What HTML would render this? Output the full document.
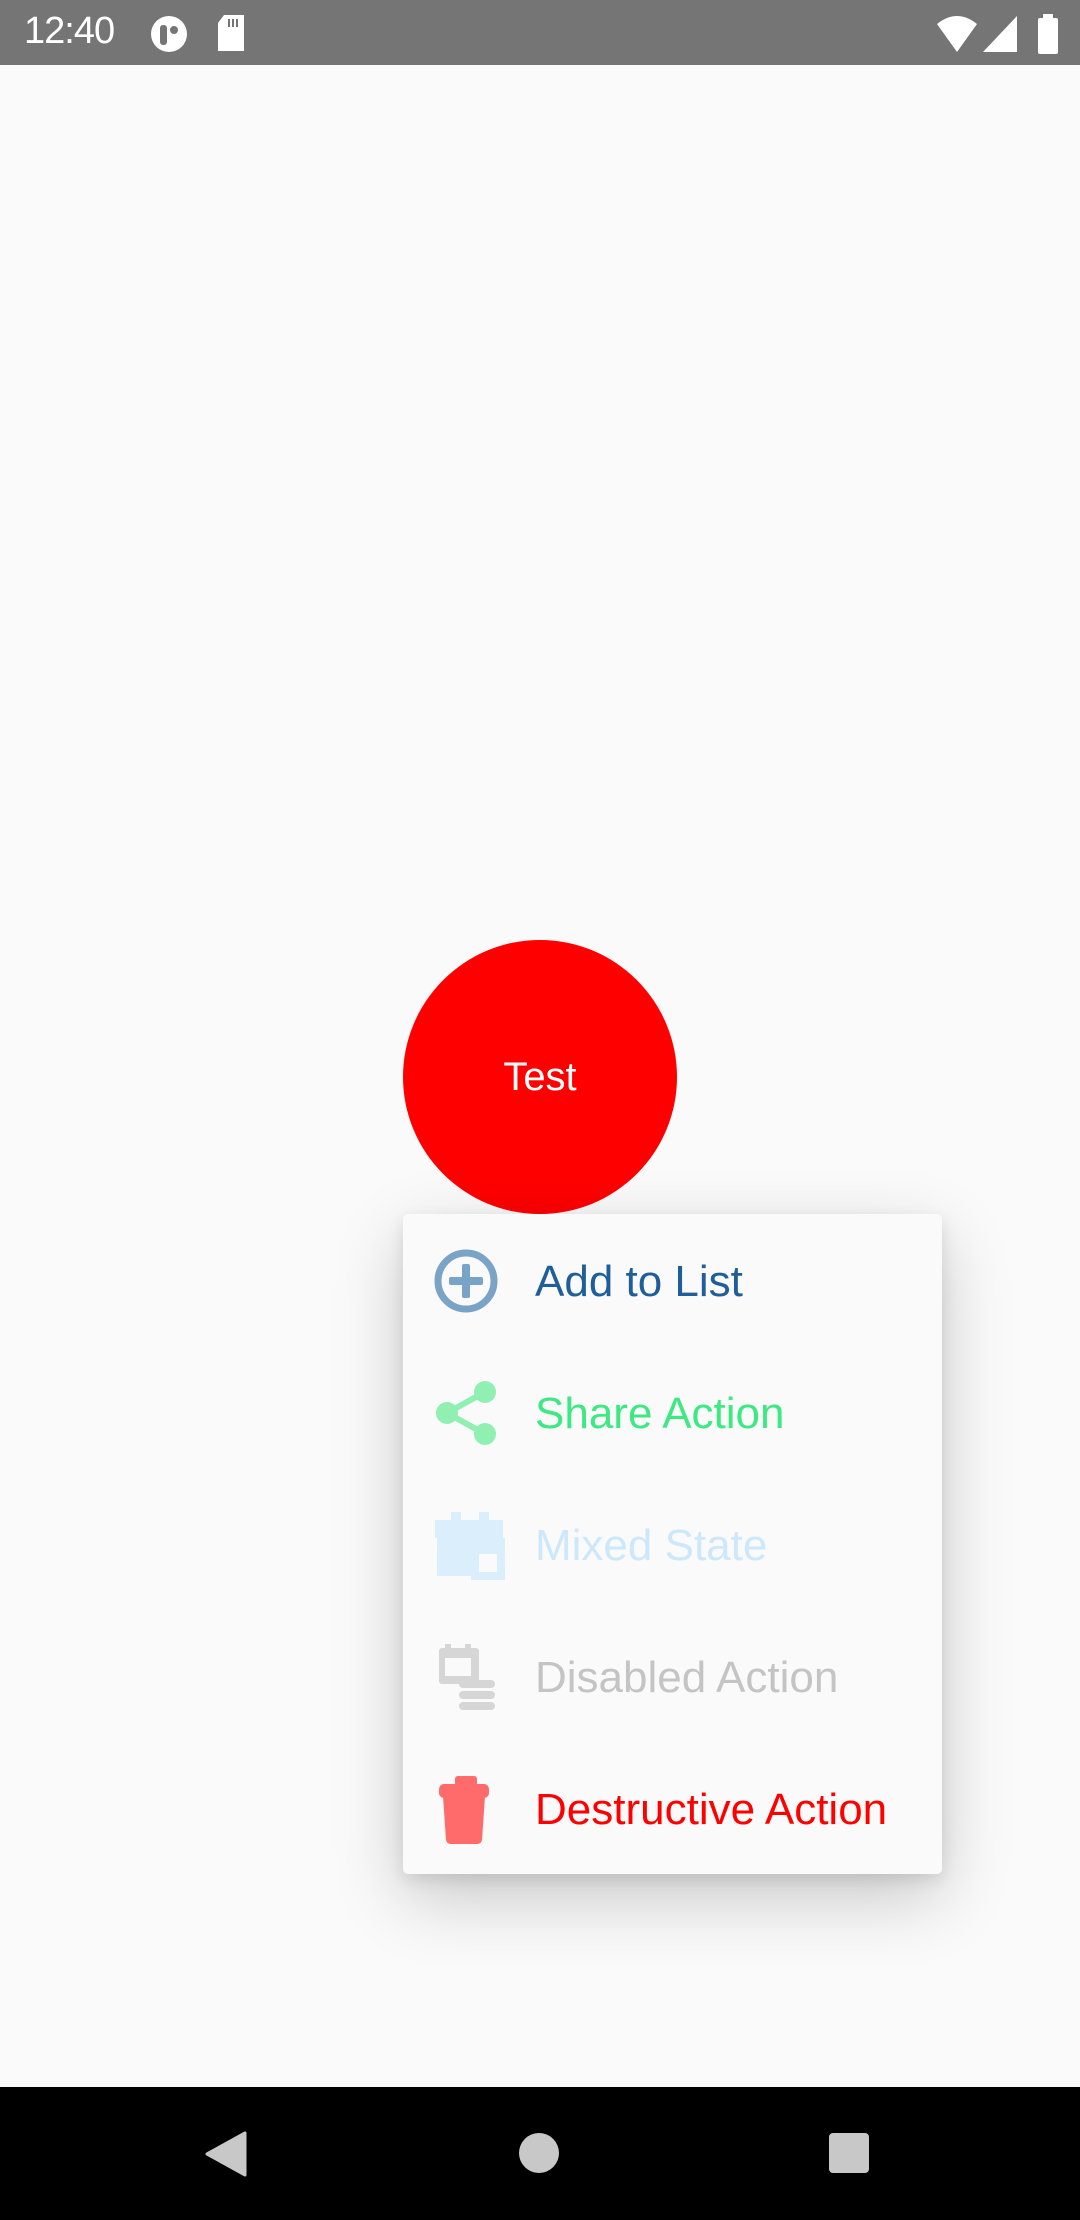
<!DOCTYPE html>
<html><head><meta charset="utf-8"><style>
*{margin:0;padding:0;box-sizing:border-box}
body{width:1080px;height:2220px;background:#fafafa;position:relative;overflow:hidden;font-family:"Liberation Sans",Roboto,sans-serif}
.sb{position:absolute;left:0;top:0;width:1080px;height:65px;background:#757575;color:#fff}
.nav{position:absolute;left:0;top:2087px;width:1080px;height:133px;background:#000}
.circle{position:absolute;left:403px;top:940px;width:274px;height:274px;border-radius:50%;background:#f00;color:#fff;font-size:40px;display:flex;align-items:center;justify-content:center}
.menu{position:absolute;left:403px;top:1214px;width:539px;height:660px;background:#fafafa;border-radius:5px;box-shadow:0 24px 70px rgba(0,0,0,.2),0 6px 16px rgba(0,0,0,.1)}
.row{position:absolute;left:0;width:539px;height:132px}
.row svg{position:absolute;left:30px;top:34px}
.row span{position:absolute;left:132px;top:2px;line-height:132px;font-size:44px}
</style></head><body>
<div class="sb">
<div style="position:absolute;left:24px;top:10px;font-size:38px;letter-spacing:-1px">12:40</div>
<svg style="position:absolute;left:150px;top:15px" width="38" height="38"><circle cx="19" cy="19" r="18" fill="#fff"/><rect x="10" y="10" width="7" height="20" rx="3" fill="#757575"/><circle cx="24" cy="15" r="4" fill="#757575"/></svg>
<svg style="position:absolute;left:216px;top:15px" width="30" height="38"><path d="M8 0H28V36H2V8Z" fill="#fff"/><rect x="12" y="4" width="2" height="8" fill="#757575"/><rect x="16" y="4" width="2" height="8" fill="#757575"/><rect x="20" y="4" width="2" height="8" fill="#757575"/></svg>
<svg style="position:absolute;left:935px;top:14px" width="44" height="40"><path d="M2 10Q22-6 42 10L22 38Z" fill="#fff"/></svg>
<svg style="position:absolute;left:983px;top:16px" width="36" height="36"><path d="M34 0V36H0Z" fill="#fff"/></svg>
<svg style="position:absolute;left:1037px;top:14px" width="22" height="40"><rect x="6" y="0" width="10" height="5" fill="#fff"/><rect x="1" y="4" width="20" height="36" rx="2" fill="#fff"/></svg>
</div>
<div class="circle">Test</div>
<div class="menu">
<div class="row" style="top:0"><svg width="66" height="66"><circle cx="33" cy="33" r="28" fill="none" stroke="#7aa3c8" stroke-width="7"/><rect x="16" y="29" width="34" height="8" rx="2" fill="#7aa3c8"/><rect x="29" y="16" width="8" height="34" rx="2" fill="#7aa3c8"/></svg><span style="color:#1f5e99">Add to List</span></div>
<div class="row" style="top:132px"><svg width="70" height="66"><g fill="#90f0b2"><circle cx="14" cy="33" r="11"/><circle cx="52" cy="12" r="11"/><circle cx="52" cy="54" r="11"/></g><path d="M14 33L52 12M14 33L52 54" stroke="#90f0b2" stroke-width="6"/></svg><span style="color:#3ee882">Share Action</span></div>
<div class="row" style="top:264px"><svg width="72" height="68"><g fill="#daeefc"><rect x="2" y="8" width="68" height="18"/><rect x="18" y="0" width="10" height="10"/><rect x="46" y="0" width="10" height="10"/><rect x="4" y="26" width="40" height="38"/><rect x="38" y="26" width="34" height="42"/></g><rect x="46" y="42" width="18" height="18" fill="#fafafa"/></svg><span style="color:#cce8fa">Mixed State</span></div>
<div class="row" style="top:396px"><svg width="70" height="70"><g fill="#d6d6d6"><rect x="6" y="4" width="40" height="36" rx="3"/><rect x="12" y="0" width="6" height="8"/><rect x="32" y="0" width="6" height="8"/><rect x="26" y="36" width="36" height="8" rx="4"/><rect x="26" y="47" width="36" height="8" rx="4"/><rect x="26" y="58" width="36" height="8" rx="4"/></g><rect x="12" y="14" width="26" height="18" fill="#fafafa"/></svg><span style="color:#c4c4c4">Disabled Action</span></div>
<div class="row" style="top:528px"><svg width="66" height="70"><g fill="#ff6b6b"><rect x="22" y="0" width="22" height="10" rx="3"/><rect x="6" y="8" width="50" height="14" rx="5"/><path d="M10 20H52L49 64Q48 68 44 68H18Q14 68 13 64Z"/></g></svg><span style="color:#f00">Destructive Action</span></div>
</div>
<div class="nav">
<svg style="position:absolute;left:205px;top:44px" width="42" height="46"><path d="M40 2V44L2 23Z" fill="#c8c8c8" stroke="#c8c8c8" stroke-linejoin="round" stroke-width="3"/></svg>
<div style="position:absolute;left:519px;top:46px;width:40px;height:40px;border-radius:50%;background:#c8c8c8"></div>
<div style="position:absolute;left:829px;top:46px;width:40px;height:40px;border-radius:4px;background:#c8c8c8"></div>
</div>
</body></html>
